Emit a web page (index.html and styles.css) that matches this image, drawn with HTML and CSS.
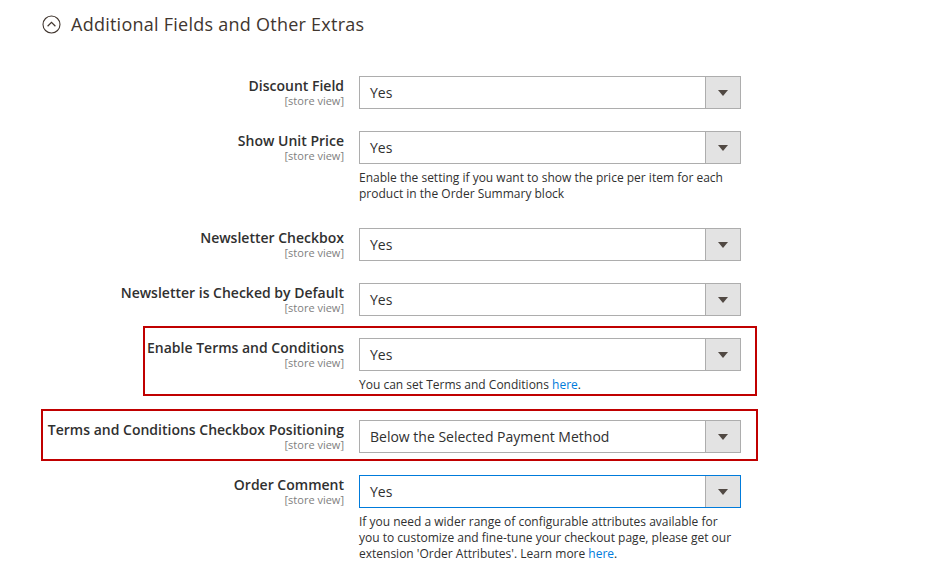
FILE: index.html
```html
<!DOCTYPE html>
<html>
<head>
<meta charset="utf-8">
<link rel="stylesheet" href="styles.css">
</head>
<body>
<div class="section">
  <div class="section-head">
    <svg class="toggle" width="19" height="19" viewBox="0 0 19 19"><circle cx="9.5" cy="9.5" r="8.5" fill="none" stroke="#41362f" stroke-width="1.1"/><path d="M5.6 11.2 L9.5 7.4 L13.4 11.2" fill="none" stroke="#41362f" stroke-width="1.2"/></svg>
    <span class="section-title">Additional Fields and Other Extras</span>
  </div>
  <div class="form">
    <div class="row">
      <div class="label"><span class="label-text">Discount Field</span><span class="scope">[store view]</span></div>
      <div class="control">
        <div class="select"><span class="value">Yes</span><span class="arrow"><i></i></span></div>
      </div>
    </div>
    <div class="row">
      <div class="label"><span class="label-text">Show Unit Price</span><span class="scope">[store view]</span></div>
      <div class="control">
        <div class="select"><span class="value">Yes</span><span class="arrow"><i></i></span></div>
        <p class="note">Enable the setting if you want to show the price per item for each product in the Order Summary block</p>
      </div>
    </div>
    <div class="row">
      <div class="label"><span class="label-text">Newsletter Checkbox</span><span class="scope">[store view]</span></div>
      <div class="control">
        <div class="select"><span class="value">Yes</span><span class="arrow"><i></i></span></div>
      </div>
    </div>
    <div class="row">
      <div class="label"><span class="label-text">Newsletter is Checked by Default</span><span class="scope">[store view]</span></div>
      <div class="control">
        <div class="select"><span class="value">Yes</span><span class="arrow"><i></i></span></div>
      </div>
    </div>
    <div class="row mark-terms">
      <div class="label"><span class="label-text">Enable Terms and Conditions</span><span class="scope">[store view]</span></div>
      <div class="control">
        <div class="select"><span class="value">Yes</span><span class="arrow"><i></i></span></div>
        <p class="note">You can set Terms and Conditions <a href="#">here</a>.</p>
      </div>
    </div>
    <div class="row mark-position">
      <div class="label"><span class="label-text">Terms and Conditions Checkbox Positioning</span><span class="scope">[store view]</span></div>
      <div class="control">
        <div class="select"><span class="value">Below the Selected Payment Method</span><span class="arrow"><i></i></span></div>
      </div>
    </div>
    <div class="row">
      <div class="label"><span class="label-text">Order Comment</span><span class="scope">[store view]</span></div>
      <div class="control">
        <div class="select focused"><span class="value">Yes</span><span class="arrow"><i></i></span></div>
        <p class="note">If you need a wider range of configurable attributes available for you to customize and fine-tune your checkout page, please get our extension 'Order Attributes'. Learn more <a href="#">here</a>.</p>
      </div>
    </div>
  </div>
</div>
</body>
</html>
```

FILE: styles.css
```css
html, body {
  margin: 0;
  padding: 0;
  background: #ffffff;
}
body {
  font-family: "Open Sans", "Noto Sans", sans-serif;
  color: #303030;
}
.section {
  padding: 0;
}
.section-head {
  display: flex;
  align-items: center;
  gap: 10px;
  padding: 14px 0 0 42px;
  height: 20px;
}
.toggle {
  display: block;
  flex: none;
}
.section-title {
  font-size: 18px;
  line-height: 20px;
  color: #41362f;
  letter-spacing: 0.25px;
}
.form {
  margin-top: 42px;
  display: flex;
  flex-direction: column;
}
.row {
  display: grid;
  grid-template-columns: 344px 382px;
  column-gap: 15px;
  padding-bottom: 22px;
  position: relative;
}
.label {
  display: flex;
  flex-direction: column;
  align-items: flex-end;
  text-align: right;
  padding-top: 2px;
}
.label-text {
  font-size: 14px;
  font-weight: 600;
  line-height: 16px;
  color: #303030;
}
.scope {
  font-size: 11px;
  line-height: 13px;
  color: #808080;
}
.control {
  display: flex;
  flex-direction: column;
}
.select {
  box-sizing: border-box;
  height: 33px;
  border: 1px solid #adadad;
  display: flex;
  align-items: stretch;
  background: #fff;
}
.select.focused {
  border-color: #007bdb;
}
.value {
  flex: 1;
  padding-left: 10px;
  font-size: 14px;
  line-height: 31px;
  color: #303030;
}
.arrow {
  width: 34px;
  flex: none;
  background: #e3e3e3;
  border-left: 1px solid #adadad;
  display: flex;
  align-items: center;
  justify-content: center;
}
.arrow i {
  display: block;
  width: 0;
  height: 0;
  border-left: 5px solid transparent;
  border-right: 5px solid transparent;
  border-top: 6px solid #514943;
}
.note {
  margin: 6px 0 4px;
  font-size: 12px;
  line-height: 16px;
  color: #303030;
}
.mark-terms .note {
  margin-bottom: 5px;
}
.note a {
  color: #007bdb;
  text-decoration: none;
}
.mark-terms::after,
.mark-position::after {
  content: "";
  position: absolute;
  box-sizing: border-box;
  border: 2px solid #c00000;
  pointer-events: none;
}
.mark-terms::after {
  left: 143px;
  top: -12px;
  width: 614px;
  height: 70px;
}
.mark-position::after {
  left: 41px;
  top: -11px;
  width: 717px;
  height: 52px;
}
```
